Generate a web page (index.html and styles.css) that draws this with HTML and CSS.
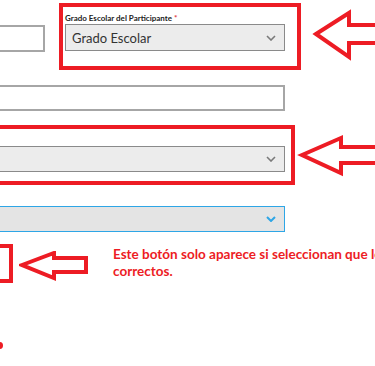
FILE: index.html
```html
<!DOCTYPE html>
<html lang="es">

<head>
  <meta charset="UTF-8">
  <meta name="viewport" content="width=device-width, initial-scale=1.0">
  <title>Registro del Participante</title>
  <link rel="stylesheet" href="styles.css">
</head>

<body>
  <div class="form">
    <!-- Fila 1 -->
    <div class="row">
      <input type="text" class="field short">
      <div class="group">
        <label class="label">Grado Escolar del Participante <span class="req">*</span></label>
        <div class="select">
          <span>Grado Escolar</span>
          <svg class="chev" width="10" height="6" viewBox="0 0 10 6"><polyline points="1,1 5,5 9,1" /></svg>
        </div>
      </div>
    </div>

    <input type="text" class="field wide">

    <div class="select wide second">
      <span></span>
      <svg class="chev" width="10" height="6" viewBox="0 0 10 6"><polyline points="1,1 5,5 9,1" /></svg>
    </div>

    <div class="select wide active">
      <span></span>
      <svg class="chev" width="10" height="6" viewBox="0 0 10 6"><polyline points="1,1 5,5 9,1" /></svg>
    </div>

    <!-- Nota -->
    <div class="note">
      <div class="mark"></div>
      <svg class="arrow-small" width="72" height="32" viewBox="0 0 72 32">
        <polygon points="3,14 35,2 35,7 67,7 67,21 35,21 35,27" />
      </svg>
      <p>Este botón solo aparece si seleccionan que los datos son correctos.</p>
    </div>
  </div>

  <!-- Marcas rojas encima -->
  <div class="frame frame-1"></div>
  <div class="frame frame-2"></div>
  <svg class="arrow arrow-1" width="70" height="54" viewBox="0 0 70 54">
    <polygon points="3,22 36,1 36,13 72,13 72,31 36,31 36,45" />
  </svg>
  <svg class="arrow arrow-2" width="80" height="44" viewBox="0 0 80 44">
    <polygon points="4,20 43,3 43,12 80,12 80,28 43,28 43,38" />
  </svg>
  <div class="dot"></div>
</body>

</html>
```
FILE: styles.css
```css
body {
  margin: 0;
  width: 375px;
  height: 366px;
  overflow: hidden;
  position: relative;
  background: #fff;
  font-family: "Open Sans", sans-serif;
}

.form {
  margin-left: -20px;
  width: 305px;
  padding-top: 13px;
  display: flex;
  flex-direction: column;
}

.row {
  display: flex;
  align-items: flex-end;
  gap: 20px;
}

.field {
  box-sizing: border-box;
  height: 27px;
  border: 2px solid #a6a6a6;
  background: #fff;
  padding: 0;
  margin: 0;
}

.short {
  width: 65px;
  margin-bottom: -1px;
}

.group {
  width: 220px;
}

.label {
  display: block;
  font-family: Lato, sans-serif;
  font-weight: bold;
  font-size: 8px;
  line-height: 11px;
  color: #222;
  white-space: nowrap;
}

.req {
  color: #e0393e;
}

.select {
  box-sizing: border-box;
  height: 27px;
  border: 1px solid #8a8a8a;
  background: #ececec;
  display: flex;
  align-items: center;
  justify-content: space-between;
  padding: 0 8px 0 6px;
  font-family: Lato, sans-serif;
  font-size: 13px;
  color: #333;
}

.chev polyline {
  fill: none;
  stroke: #7a7a7a;
  stroke-width: 1.6;
}

.wide {
  width: 305px;
  height: 26px;
}

.form > .field.wide {
  margin-top: 34px;
}

.second {
  margin-top: 35px;
}

.active {
  margin-top: 34px;
  border-color: #2ea6e6;
  background: #e4e4e4;
}

.active .chev polyline {
  stroke: #2ea6e6;
  stroke-width: 2;
}

.note {
  display: flex;
  align-items: flex-start;
  margin-top: 12px;
}

.mark {
  box-sizing: border-box;
  width: 33px;
  height: 39px;
  border: 4px solid #ed1c24;
  flex: none;
}

.arrow-small {
  flex: none;
  margin: 7px 0 0 6px;
}

.arrow-small polygon,
.arrow polygon {
  fill: none;
  stroke: #ed1c24;
  stroke-width: 4;
  stroke-linejoin: miter;
}

.note p {
  margin: 2px 0 0 22px;
  width: 350px;
  flex: none;
  font-family: Lato, sans-serif;
  font-weight: bold;
  font-size: 13.5px;
  line-height: 17px;
  color: #ed1c24;
}

.frame {
  position: absolute;
  border: 4px solid #ed1c24;
  box-sizing: border-box;
}

.frame-1 {
  left: 59px;
  top: 3px;
  width: 242px;
  height: 67px;
}

.frame-2 {
  left: -10px;
  top: 125px;
  width: 305px;
  height: 60px;
}

.arrow {
  position: absolute;
  overflow: visible;
}

.arrow-1 {
  left: 313px;
  top: 12px;
}

.arrow-2 {
  left: 298px;
  top: 135px;
}

.dot {
  position: absolute;
  left: -4px;
  top: 342px;
  width: 7px;
  height: 7px;
  border-radius: 50%;
  background: #ed1c24;
}
```
